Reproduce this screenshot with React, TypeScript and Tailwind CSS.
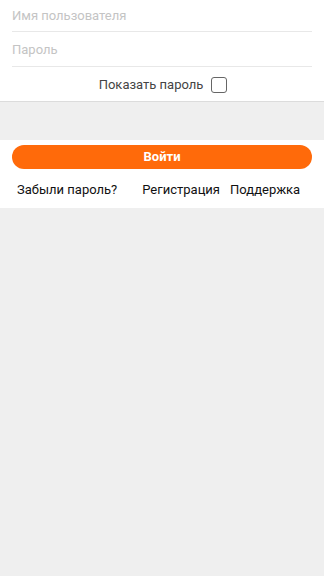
import React from 'react';

const font = { fontFamily: 'Roboto, "Noto Sans", sans-serif' };

export default function App() {
  return (
    <div className="min-h-[576px] w-full bg-[#efefef] text-[13px]" style={font}>
      <div className="bg-white px-3">
        <div className="flex h-[32px] items-center border-b border-[#e8e8e8] pt-[1px]">
          <input
            className="w-full bg-transparent text-[13px] text-[#333] outline-none placeholder:text-[#c4c4c4]"
            placeholder="Имя пользователя"
          />
        </div>
        <div className="flex h-[35px] items-center border-b border-[#e8e8e8] pt-[1px]">
          <input
            type="password"
            className="w-full bg-transparent text-[13px] text-[#333] outline-none placeholder:text-[#c4c4c4]"
            placeholder="Пароль"
          />
        </div>
        <div className="flex h-[34px] items-center justify-center gap-[8px] pl-[2px] pt-[1px]">
          <span className="text-[#444]">Показать пароль</span>
          <span className="h-[16px] w-[16px] rounded-[3px] border-[1.5px] border-[#666]" />
        </div>
      </div>

      <div className="h-[39px] border-t border-[#dcdcdc]" />

      <div className="bg-white px-3 pt-[5px]">
        <button className="flex h-[24px] w-full items-center justify-center rounded-full bg-[#ff6a0a] text-[13px] font-bold text-white">
          Войти
        </button>
        <div className="flex h-[39px] items-center whitespace-nowrap pt-[3px] text-[#111]">
          <span className="ml-[5px]">Забыли пароль?</span>
          <span className="ml-[25px]">Регистрация</span>
          <span className="ml-[10px]">Поддержка</span>
        </div>
      </div>
    </div>
  );
}
